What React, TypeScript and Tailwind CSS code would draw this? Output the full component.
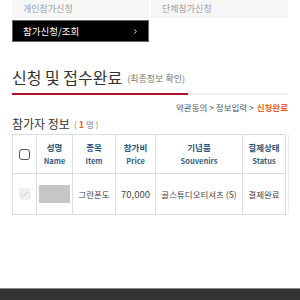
import { Check, ChevronRight } from "lucide-react";

const font = { fontFamily: '"Noto Sans CJK KR", "Noto Sans", sans-serif' };

const headers = [
  { ko: "성명", en: "Name", w: "w-[36px]" },
  { ko: "종목", en: "Item", w: "w-[43px]" },
  { ko: "참가비", en: "Price", w: "w-[40px]" },
  { ko: "기념품", en: "Souvenirs", w: "w-[87px]" },
  { ko: "결제상태", en: "Status", w: "w-[43px]" },
];

const App = () => {
  return (
    <div className="relative w-[300px] h-[300px] overflow-hidden bg-white" style={font}>
      {/* Tabs */}
      <div className="flex gap-[2px] px-3">
        <div className="w-[137px] h-[18px] bg-[#f6f6f6] pl-[11px] text-[9px] leading-[17px] text-[#a0a0a0]">
          개인참가신청
        </div>
        <div className="w-[137px] h-[18px] bg-[#f6f6f6] pl-[11px] text-[9px] leading-[17px] text-[#a0a0a0]">
          단체참가신청
        </div>
      </div>
      <div className="mx-3 mt-[2px] w-[137px] h-[22px] bg-black border border-[#666] flex items-center justify-between pl-[10px] pr-[9px]">
        <span className="text-[9.5px] text-white">참가신청/조회</span>
        <ChevronRight className="w-[7px] h-[7px] text-white" strokeWidth={3} />
      </div>

      {/* Title */}
      <div className="px-3 mt-[25px] flex items-end gap-[5px] h-[20px]">
        <span className="text-[16px] leading-[20px] text-[#333]">신청 및 접수완료</span>
        <span className="text-[9px] leading-[16px] text-[#777]">(최종정보 확인)</span>
      </div>
      <div className="mx-3 mt-[6px] h-[2px] bg-[#eeeeee] relative">
        <div className="absolute left-0 top-0 h-[2px] w-[176px] bg-[#b2102a]" />
      </div>

      {/* Breadcrumb */}
      <div className="px-3 mt-[6px] flex justify-end text-[8.5px] leading-[12px] text-[#555]">
        <span>약관동의 &gt; 정보입력 &gt;</span>
        <span className="ml-[3px] text-[#e2622a] font-bold">신청완료</span>
      </div>

      {/* Participant header */}
      <div className="px-3 mt-[3px] h-[16px] flex items-end gap-[4px]">
        <span className="text-[12px] leading-[16px] text-[#333]">참가자 정보</span>
        <span className="text-[8.5px] leading-[14px] text-[#888]">
          ( <span className="text-[#e2622a] font-bold text-[9px]">1</span> 명 )
        </span>
      </div>

      {/* Table */}
      <div className="ml-3 mt-[2px] flex">
        <table className="border-collapse text-center table-fixed w-[273px] border border-[#dddddd]">
          <thead>
            <tr className="h-[39px]">
              <th className="w-[24px] border border-[#dddddd] font-normal">
                <div className="mx-auto w-[11px] h-[11px] rounded-[3px] border border-[#555]" />
              </th>
              {headers.map((h) => (
                <th key={h.ko} className={`${h.w} border border-[#dddddd] p-0`}>
                  <div className="text-[8.5px] leading-[11px] font-bold text-[#2f5677]">{h.ko}</div>
                  <div className="text-[7.5px] leading-[10px] font-bold text-[#3d6282] mt-[3px]">{h.en}</div>
                </th>
              ))}
            </tr>
          </thead>
          <tbody>
            <tr className="h-[41px] text-[8.5px] text-[#444]">
              <td className="border border-[#dddddd]">
                <div className="mx-auto w-[12px] h-[12px] rounded-[3px] bg-[#efefef] flex items-center justify-center">
                  <Check className="w-[9px] h-[9px] text-[#bbbbbb]" strokeWidth={2} />
                </div>
              </td>
              <td className="border border-[#dddddd] px-[2px]">
                <div className="h-[18px] bg-[#c6c6c6]" />
              </td>
              <td className="border border-[#dddddd]">그란폰도</td>
              <td className="border border-[#dddddd] text-[9.5px]">70,000</td>
              <td className="border border-[#dddddd]">골스튜디오티셔츠 (S)</td>
              <td className="border border-[#dddddd]">결제완료</td>
            </tr>
          </tbody>
        </table>
        <div className="ml-[2px] w-px h-[80px] bg-[#eeeeee]" />
      </div>

      {/* Footer */}
      <div className="absolute left-0 bottom-0 w-full h-[12px] bg-[#333333] border-t border-[#8a8a8a]" />
    </div>
  );
};

export default App;
